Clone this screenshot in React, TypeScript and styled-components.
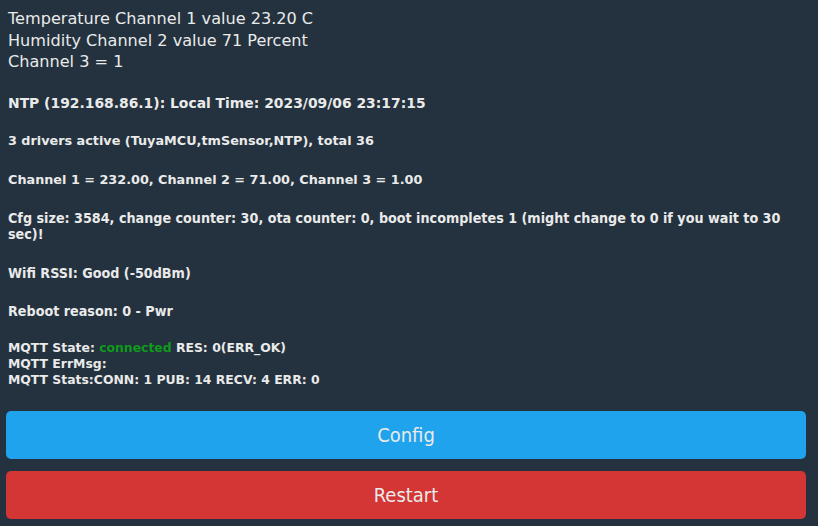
import styled, { createGlobalStyle } from 'styled-components';

const GlobalStyle = createGlobalStyle`
  html, body {
    margin: 0;
    padding: 0;
    background-color: #23323e;
  }
  body {
    font-family: "DejaVu Sans", Verdana, sans-serif;
    color: #eaeaea;
  }
`;

const Page = styled.div`
  width: 818px;
  height: 526px;
  box-sizing: border-box;
  padding: 8px 12px 0 8px;
  overflow: hidden;
`;

const StateBlock = styled.div`
  font-size: 16.1px;
  line-height: 21.5px;
  margin-bottom: 22px;
`;

const InfoBlock = styled.p<{ condensed?: boolean; size?: number }>`
  margin: 0 0 22.5px;
  font-size: ${(props) => props.size ?? 12.8}px;
  line-height: 16px;
  font-weight: bold;
  font-family: ${(props) =>
    props.condensed
      ? '"DejaVu Sans Condensed", "DejaVu Sans", sans-serif'
      : '"DejaVu Sans", Verdana, sans-serif'};
  font-stretch: ${(props) => (props.condensed ? 'condensed' : 'normal')};
`;

const MqttBlock = styled(InfoBlock)`
  margin: -2px 0 0;
`;

const Connected = styled.span`
  color: #0e9a1a;
`;

const ButtonStack = styled.div`
  display: flex;
  flex-direction: column;
  gap: 12px;
  margin: 23px 0 0 -2px;
`;

const ActionButton = styled.button<{ tone: 'blue' | 'red' }>`
  height: 48px;
  width: 100%;
  border: none;
  border-radius: 5px;
  background-color: ${(props) => (props.tone === 'blue' ? '#1fa3ec' : '#d43535')};
  color: #eaeaea;
  font-family: "DejaVu Sans Condensed", "DejaVu Sans", sans-serif;
  font-stretch: condensed;
  font-size: 20px;
  cursor: pointer;
`;

export default function App() {
  return (
    <>
      <GlobalStyle />
      <Page>
        <StateBlock>
          <div>Temperature Channel 1 value 23.20 C</div>
          <div>Humidity Channel 2 value 71 Percent</div>
          <div>Channel 3 = 1</div>
        </StateBlock>
        <InfoBlock size={13.9}>NTP (192.168.86.1): Local Time: 2023/09/06 23:17:15</InfoBlock>
        <InfoBlock>3 drivers active (TuyaMCU,tmSensor,NTP), total 36</InfoBlock>
        <InfoBlock>Channel 1 = 232.00, Channel 2 = 71.00, Channel 3 = 1.00</InfoBlock>
        <InfoBlock condensed size={14.2}>
          Cfg size: 3584, change counter: 30, ota counter: 0, boot incompletes 1 (might change to 0 if you wait to 30 sec)!
        </InfoBlock>
        <InfoBlock condensed size={14.2}>Wifi RSSI: Good (-50dBm)</InfoBlock>
        <InfoBlock condensed size={14.2}>Reboot reason: 0 - Pwr</InfoBlock>
        <MqttBlock size={12.4}>
          MQTT State: <Connected>connected</Connected> RES: 0(ERR_OK)
          <br />
          MQTT ErrMsg:
          <br />
          MQTT Stats:CONN: 1 PUB: 14 RECV: 4 ERR: 0
        </MqttBlock>
        <ButtonStack>
          <ActionButton tone="blue">Config</ActionButton>
          <ActionButton tone="red">Restart</ActionButton>
        </ButtonStack>
      </Page>
    </>
  );
}
